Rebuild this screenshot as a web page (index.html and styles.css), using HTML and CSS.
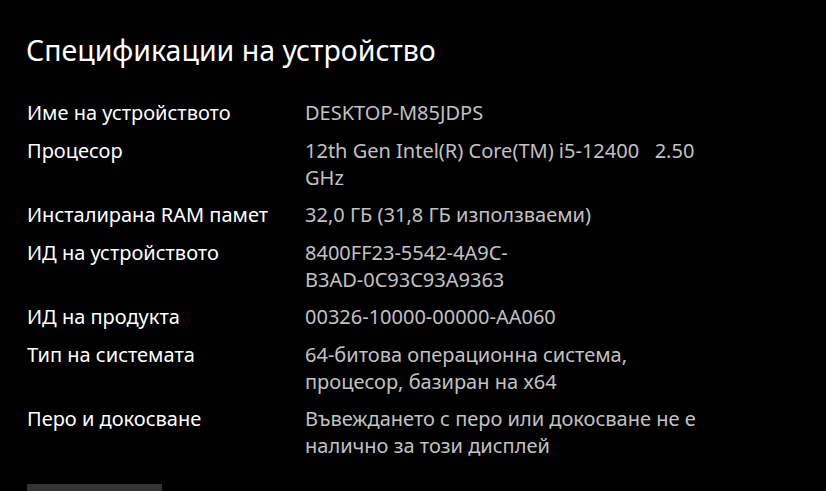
FILE: index.html
```html
<!DOCTYPE html>
<html lang="bg">
<head>
<meta charset="utf-8">
<link rel="stylesheet" href="styles.css">
</head>
<body>
<main class="page">
  <h1 class="title">Спецификации на устройство</h1>
  <dl class="specs">
    <div class="row"><dt>Име на устройството</dt><dd>DESKTOP-M85JDPS</dd></div>
    <div class="row"><dt>Процесор</dt><dd>12th Gen Intel(R) Core(TM) i5-12400&nbsp;&nbsp;&nbsp;2.50 GHz</dd></div>
    <div class="row"><dt>Инсталирана RAM памет</dt><dd>32,0 ГБ (31,8 ГБ използваеми)</dd></div>
    <div class="row"><dt>ИД на устройството</dt><dd>8400FF23-5542-4A9C-<br>B3AD-0C93C93A9363</dd></div>
    <div class="row"><dt>ИД на продукта</dt><dd>00326-10000-00000-AA060</dd></div>
    <div class="row"><dt>Тип на системата</dt><dd>64-битова операционна система, процесор, базиран на x64</dd></div>
    <div class="row"><dt>Перо и докосване</dt><dd>Въвеждането с перо или докосване не е налично за този дисплей</dd></div>
  </dl>
  <button class="copy" type="button"></button>
</main>
</body>
</html>
```
FILE: styles.css
```css
html, body {
  margin: 0;
  padding: 0;
  background: #000;
  height: 100%;
  overflow: hidden;
}
.page {
  box-sizing: border-box;
  height: 491px;
  overflow: hidden;
  padding: 30px 0 0 27px;
  font-family: "Noto Sans", "Open Sans", sans-serif;
  color: #fff;
}
.title {
  margin: 0 0 0 -1px;
  font-size: 28.5px;
  font-weight: 400;
  line-height: 40px;
  color: #fff;
}
.specs {
  margin: 29px 0 0 0;
  display: flex;
  flex-direction: column;
  gap: 10.5px;
}
.row {
  display: grid;
  grid-template-columns: 278px 396px;
  font-size: 20px;
  line-height: 27px;
}
.row dt {
  color: #fff;
}
.row dd {
  margin: 0;
  color: #c2c2c2;
  word-break: break-word;
}
.copy {
  display: block;
  margin-top: 25px;
  width: 135px;
  height: 32px;
  border: none;
  background: #333;
  padding: 0;
}
```
